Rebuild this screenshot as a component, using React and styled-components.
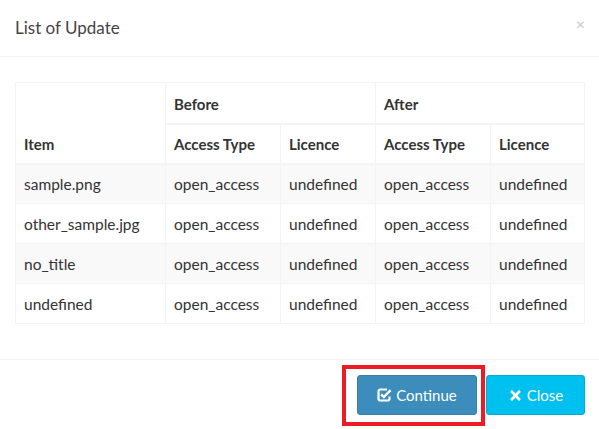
import React from "react";
import styled, { createGlobalStyle } from "styled-components";
import { FaTimes } from "react-icons/fa";

const Global = createGlobalStyle`
  html, body { margin: 0; padding: 0; background: #fff; }
  body { font-family: Lato, "Open Sans", sans-serif; color: #333; }
  * { box-sizing: border-box; }
`;

const Modal = styled.div`
  width: 599px;
  background: #fff;
`;

const Header = styled.div`
  display: flex;
  align-items: center;
  justify-content: space-between;
  height: 57px;
  padding: 0 15px;
  border-bottom: 1px solid #f4f4f4;
`;

const Title = styled.h4`
  margin: 0;
  font-size: 17px;
  font-weight: 400;
  color: #444;
  margin-top: -1px;
`;

const CloseX = styled.span`
  font-size: 16px;
  color: #c8c8c8;
  line-height: 1;
  margin-top: -8px;
  margin-right: -1px;
`;

const Body = styled.div`
  padding: 25px 15px 15px;
`;

const Table = styled.table`
  width: 569px;
  border-collapse: collapse;
  table-layout: fixed;
  border: 1px solid #f4f4f4;
  margin-bottom: 20px;
  font-size: 15.5px;
`;

const Th = styled.th`
  text-align: left;
  font-weight: 700;
  font-size: 15px;
  vertical-align: bottom;
  padding: 0 8px 10px;
  height: ${p => p.$h}px;
  border: 1px solid #f4f4f4;
  border-bottom-width: 2px;
  color: #333;
`;

const Tr = styled.tr`
  background: ${p => (p.$odd ? "#f9f9f9" : "#fff")};
`;

const Td = styled.td`
  padding: 0 8px;
  height: 40px;
  border: 1px solid #f4f4f4;
  vertical-align: middle;
  color: #333;
  white-space: nowrap;
`;

const Footer = styled.div`
  display: flex;
  justify-content: flex-end;
  gap: 9px;
  padding: 15px 14px 14px 15px;
  border-top: 1px solid #f4f4f4;
`;

const Button = styled.button`
  position: relative;
  display: inline-flex;
  align-items: center;
  justify-content: center;
  gap: 4px;
  width: ${p => p.$w}px;
  height: 40px;
  border-radius: 3px;
  border: 1px solid ${p => p.$border};
  background: ${p => p.$bg};
  color: #fff;
  font-family: inherit;
  font-size: 15px;
  padding: 0;
  ${p =>
    p.$highlight &&
    `&::after {
      content: "";
      position: absolute;
      left: -16px; right: -9px; top: -11px; bottom: -12px;
      border: 4px solid #ed1c24;
    }`}
`;

const CheckIcon = () => (
  <svg width="15" height="14" viewBox="0 0 15 14" aria-hidden="true">
    <path
      d="M10 1.5H3.2A1.7 1.7 0 0 0 1.5 3.2v7.6a1.7 1.7 0 0 0 1.7 1.7h7.6a1.7 1.7 0 0 0 1.7-1.7V8.5"
      fill="none"
      stroke="#fff"
      strokeWidth="2.2"
    />
    <path
      d="M4.2 6.4 6.8 9 13.6 2.2"
      fill="none"
      stroke="#fff"
      strokeWidth="2.4"
    />
  </svg>
);

const rows = [
  "sample.png",
  "other_sample.jpg",
  "no_title",
  "undefined",
];

export default function App() {
  return (
    <>
      <Global />
      <Modal>
        <Header>
          <Title>List of Update</Title>
          <CloseX>×</CloseX>
        </Header>
        <Body>
          <Table>
            <colgroup>
              <col style={{ width: 150 }} />
              <col style={{ width: 115 }} />
              <col style={{ width: 95 }} />
              <col style={{ width: 115 }} />
              <col style={{ width: 94 }} />
            </colgroup>
            <thead>
              <tr>
                <Th rowSpan={2} $h={81}>Item</Th>
                <Th colSpan={2} $h={41}>Before</Th>
                <Th colSpan={2} $h={41}>After</Th>
              </tr>
              <tr>
                <Th $h={40}>Access Type</Th>
                <Th $h={40}>Licence</Th>
                <Th $h={40}>Access Type</Th>
                <Th $h={40}>Licence</Th>
              </tr>
            </thead>
            <tbody>
              {rows.map((r, i) => (
                <Tr key={r} $odd={i % 2 === 0}>
                  <Td>{r}</Td>
                  <Td>open_access</Td>
                  <Td>undefined</Td>
                  <Td>open_access</Td>
                  <Td>undefined</Td>
                </Tr>
              ))}
            </tbody>
          </Table>
        </Body>
        <Footer>
          <Button $w={120} $bg="#3c8dbc" $border="#367fa9" $highlight>
            <CheckIcon />
            Continue
          </Button>
          <Button $w={99} $bg="#00c0ef" $border="#00acd6">
            <FaTimes size={15} />
            Close
          </Button>
        </Footer>
      </Modal>
    </>
  );
}
